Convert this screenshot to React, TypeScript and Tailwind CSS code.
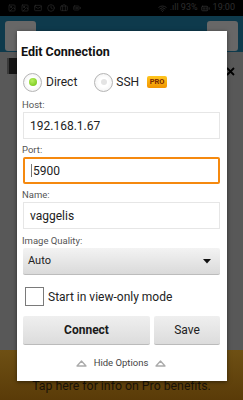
import { Wifi, BatteryFull, Mail, Image as ImageIcon, Clock, Briefcase } from 'lucide-react'

const font = { fontFamily: 'Roboto, "Liberation Sans", sans-serif' }

function Field({ label, value, focused, first }: { label: string; value: string; focused?: boolean; first?: boolean }) {
  return (
    <div className={`flex flex-col ${first ? 'mt-[6px]' : 'mt-[4px]'}`}>
      <div className="text-[9.5px] leading-[13px] text-[#555]">{label}</div>
      <div
        className={`mt-[1px] ml-[1px] h-[27px] flex items-center pl-[6px] text-[12px] text-[#222] bg-white ${
          focused ? 'border-2 border-[#f5890f] rounded-[2px] pl-[5px]' : 'border border-[#e6e6e6]'
        }`}
      >
        {focused && <span className="w-px h-[13px] bg-[#777] mr-[1px]" />}
        {value}
      </div>
    </div>
  )
}

function TriUp() {
  return (
    <svg width="11" height="7" viewBox="0 0 11 7">
      <path d="M1 6 L5.5 1 L10 6 Z" fill="none" stroke="#aaa" strokeWidth="1.3" strokeLinejoin="round" />
    </svg>
  )
}

function Radio({ checked }: { checked?: boolean }) {
  return (
    <div className="w-[19px] h-[19px] rounded-full border border-[#b5b5b5] bg-[radial-gradient(circle,#ffffff_40%,#ececec)] flex items-center justify-center">
      {checked ? (
        <div className="w-[8px] h-[8px] rounded-full bg-[radial-gradient(circle_at_40%_35%,#b8f060,#6cc010)]" />
      ) : (
        <div className="w-[6px] h-[6px] rounded-full bg-[#e4e4e4]" />
      )}
    </div>
  )
}

export default function App() {
  return (
    <div className="relative w-[243px] h-[400px] overflow-hidden flex flex-col bg-[#585858]" style={font}>
      {/* status bar */}
      <div className="h-[16px] shrink-0 bg-black flex items-center justify-between px-[8px] text-[9px] text-[color:#2e2e2e]">
        <div className="flex items-center gap-[5px]">
          <ImageIcon size={8} color="#2c2c2c" />
          <ImageIcon size={8} color="#2c2c2c" />
          <Mail size={8} color="#2c2c2c" />
          <Clock size={8} color="#2c2c2c" />
          <Briefcase size={8} color="#2c2c2c" />
          <BatteryFull size={8} color="#2c2c2c" />
        </div>
        <div className="flex items-center gap-[3px]">
          <Wifi size={9} color="#333" />
          <span>.ıll 93%</span>
          <BatteryFull size={9} color="#333" />
          <span>19:00</span>
        </div>
      </div>
      {/* app bar */}
      <div className="h-[36px] shrink-0 bg-[#0e3a4c] flex items-start justify-between px-[5px] pt-[5px]">
        <div className="w-[31px] h-[30px] rounded-[3px] bg-[#676767]" />
        <div className="w-[31px] h-[30px] rounded-[3px] bg-[#676767]" />
      </div>
      <div className="flex-1 flex justify-between items-start pl-[7px] pr-[8px] pt-[6px]">
        <div className="w-[10px] h-[16px] bg-[#151515] border-l-2 border-[#3a3a3a]" />
        <svg width="9" height="9" viewBox="0 0 9 9" className="mt-[9px]">
          <path d="M1 1 L8 8 M8 1 L1 8" stroke="#000" strokeWidth="1.8" />
        </svg>
      </div>
      {/* pro banner */}
      <div className="h-[50px] shrink-0 bg-[linear-gradient(to_bottom,#6e5014,#5a3b08)] flex items-end justify-center pb-[5px]">
        <span className="text-[12.3px] leading-[18px] text-[#1a1308]">Tap here for info on Pro benefits.</span>
      </div>

      {/* dialog */}
      <div className="absolute left-[17px] top-[31px] w-[210px] h-[350px] bg-white shadow-[0_1px_4px_rgba(0,0,0,0.5)] pl-[5px] pr-[7px] flex flex-col">
        <div className="text-[12.5px] leading-[20px] font-bold text-[#111] pt-[11px] -ml-[1px] box-content">Edit Connection</div>

        <div className="flex items-center h-[20px] mt-[10px] pl-[1px]">
          <Radio checked />
          <span className="ml-[4px] text-[12px] text-[#222]">Direct</span>
          <div className="ml-[17px]">
            <Radio />
          </div>
          <span className="ml-[3px] text-[12px] text-[#222]">SSH</span>
          <span className="ml-[8px] w-[20px] h-[12px] rounded-[2px] bg-[linear-gradient(to_bottom,#ffc61f,#f29400)] text-[7.5px] font-bold text-[#7a2800] flex items-center justify-center">PRO</span>
        </div>

        <Field label="Host:" value="192.168.1.67" first />
        <Field label="Port:" value="5900" focused />
        <Field label="Name:" value="vaggelis" />

        <div className="text-[9.5px] leading-[13px] text-[#555] mt-[5px]">Image Quality:</div>
        <div className="mt-[1px] ml-[1px] h-[27px] rounded-[2px] bg-[linear-gradient(to_bottom,#f3f3f3,#dadada)] border-b border-[#bcbcbc] flex items-center justify-between pl-[5px] pr-[9px]">
          <span className="text-[11px] text-[#222]">Auto</span>
          <svg width="8" height="5" viewBox="0 0 8 5">
            <path d="M0 0 L8 0 L4 4.5 Z" fill="#111" />
          </svg>
        </div>

        <div className="flex items-center h-[19px] mt-[12px] pl-[3px]">
          <div className="w-[19px] h-[19px] border border-[#7a7a7a] bg-white" />
          <span className="ml-[4px] text-[12px] text-[#222]">Start in view-only mode</span>
        </div>

        <div className="flex gap-[4px] mt-[10px] ml-[1px]">
          <button className="w-[127px] h-[29px] rounded-[2px] bg-[linear-gradient(to_bottom,#efefef,#dcdcdc)] border-b border-[#bbb] text-[12px] font-bold text-[#1a1a1a]">Connect</button>
          <button className="flex-1 h-[29px] rounded-[2px] bg-[linear-gradient(to_bottom,#efefef,#dcdcdc)] border-b border-[#bbb] text-[12px] text-[#222]">Save</button>
        </div>

        <div className="flex items-center justify-center gap-[7px] mt-[10px] h-[16px] text-[9.5px] text-[#444]">
          <TriUp />
          <span>Hide Options</span>
          <TriUp />
        </div>
      </div>
    </div>
  )
}
